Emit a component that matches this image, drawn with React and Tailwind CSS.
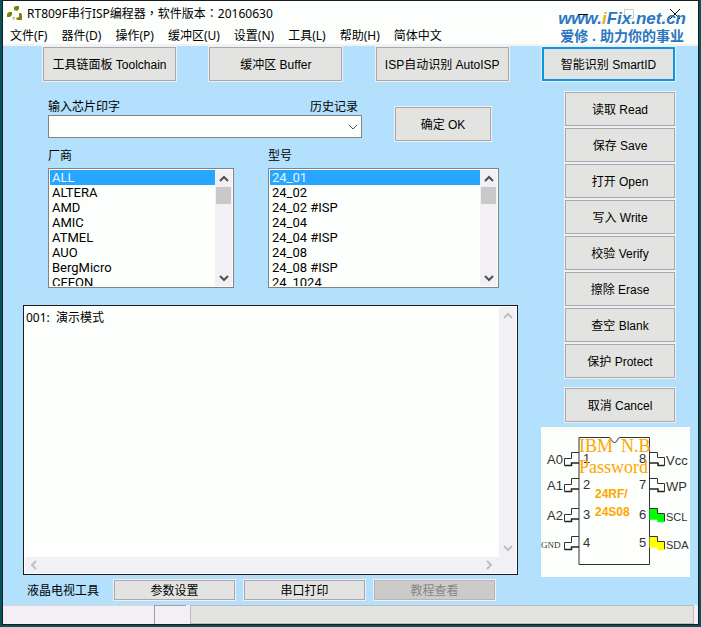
import React, { useState } from 'react';

const menus = ['文件(F)', '器件(D)', '操作(P)', '缓冲区(U)', '设置(N)', '工具(L)', '帮助(H)', '简体中文'];
const tools = ['工具链面板 Toolchain', '缓冲区 Buffer', 'ISP自动识别 AutoISP', '智能识别 SmartID'];
const actions = ['读取 Read', '保存 Save', '打开 Open', '写入 Write', '校验 Verify', '擦除 Erase', '查空 Blank', '保护 Protect'];
const vendors = ['ALL', 'ALTERA', 'AMD', 'AMIC', 'ATMEL', 'AUO', 'BergMicro', 'CFEON'];
const models = ['24_01', '24_02', '24_02 #ISP', '24_04', '24_04 #ISP', '24_08', '24_08 #ISP', '24_1024'];

const Chevron = ({ dir = 'down', color = '#505050' }) => {
    const d = {
        down: 'M1 3 L5 7 L9 3',
        up: 'M1 7 L5 3 L9 7',
        left: 'M7 1 L3 5 L7 9',
        right: 'M3 1 L7 5 L3 9',
    }[dir];
    return (
        <svg width="10" height="10" viewBox="0 0 10 10" fill="none" stroke={color} strokeWidth="2">
            <path d={d} />
        </svg>
    );
};

const Button = ({ children, className = '', active = false, disabled = false }) => {
    let look = 'border border-[#a9a8ae] bg-[#e3e4e2] text-black outline outline-[#f0eff4]';
    if (active) look = 'border-2 border-[#0d96dd] bg-[#e3e4e2] text-black outline outline-[#e4f1fa]';
    if (disabled) look = 'border border-[#b4b5b4] bg-[#cbccca] text-[#858585] outline outline-[#f0eff4]';
    return (
        <button disabled={disabled} className={`whitespace-nowrap pt-0.5 text-center ${look} ${className}`}>
            {children}
        </button>
    );
};

const ListBox = ({ label, items, className = '' }) => {
    const [selected, setSelected] = useState(items[0]);
    return (
        <div className={className}>
            <div className="h-5 leading-4">{label}</div>
            <div className="flex h-[120px] border border-[#838383] bg-[#fcfffc] p-px">
                <ul role="listbox" aria-label={label} className="flex-1 overflow-hidden font-[Roboto,'Liberation_Sans',sans-serif] text-[13px] leading-[15px]">
                    {items.map((item) => (
                        <li
                            key={item}
                            role="option"
                            aria-selected={item === selected}
                            onClick={() => setSelected(item)}
                            className={`h-[15px] px-0.5 ${item === selected ? 'bg-[#26a6ff] text-[#e8f4ff]' : 'text-black'}`}
                        >
                            {item}
                        </li>
                    ))}
                </ul>
                <div className="flex w-[17px] flex-col items-center bg-[#f3f0f5]">
                    <div className="flex h-[17px] items-center"><Chevron dir="up" /></div>
                    <div className="h-[17px] w-[15px] bg-[#c8c9c8]" />
                    <div className="mt-auto flex h-[17px] items-center"><Chevron /></div>
                </div>
            </div>
        </div>
    );
};

// DIP-8 outline, pins 1-4 on the left and 8-5 on the right
const pins = [
    { y: 25, left: 'A0', right: 'Vcc', fill: 'none' },
    { y: 51, left: 'A1', right: 'WP', fill: 'none' },
    { y: 81, left: 'A2', right: 'SCL', fill: '#00ff00' },
    { y: 109, left: 'GND', right: 'SDA', fill: '#ffff00' },
];

const ChipDiagram = () => (
    <svg viewBox="0 0 149 150" className="w-full bg-[#fcfffc] font-['Liberation_Sans',Arial,sans-serif]" role="img" aria-label="24RF/24S08">
        <path d="M38 10.5 H68 C71 10.5 70 15.5 73.5 15.5 C77 15.5 76 10.5 79 10.5 H108.5 V137.5 H38 Z" fill="none" stroke="#333" />
        {pins.map(({ y, left, right, fill }, i) => (
            <g key={left} transform={`translate(0 ${y})`} fill="#333">
                <path d="M38 .5 H30.5 V6.5 H23.5 V13.5" fill="none" stroke="#333" />
                <path d="M23.5 13.5 H30.5 V11 H38" fill="none" stroke="#222" strokeWidth="1.5" />
                <path d="M108.5 .5 H116.5 V5.5 H123.5 V13.5 H117 V11 H108.5 Z" fill={fill} />
                <path d="M108.5 .5 H116.5 V5.5 H123.5 V13.5" fill="none" stroke="#333" />
                <path d="M123.5 13.5 H117 V11 H108.5" fill="none" stroke={fill === 'none' ? '#222' : fill} strokeWidth="1.5" />
                {left === 'GND' ? (
                    <text x="0" y="12" fontSize="9" className="font-['Liberation_Serif',serif]">{left}</text>
                ) : (
                    <text x="6" y="12" fontSize="13">{left}</text>
                )}
                <text x="42" y="11" fontSize="13">{i + 1}</text>
                <text x="98" y="11" fontSize="13">{8 - i}</text>
                <text x="125" y="13" fontSize={i > 1 ? 11 : 13}>{right}</text>
            </g>
        ))}
        <g fill="#ffa500">
            <g fontSize="18" className="font-['Liberation_Serif',serif]">
                <text x="38" y="25">IBM</text>
                <text x="80" y="25">N.B</text>
                <text x="38" y="46">Password</text>
            </g>
            <g fontSize="12" fontWeight="bold">
                <text x="54" y="71">24RF/</text>
                <text x="54" y="89">24S08</text>
            </g>
        </g>
    </svg>
);

const App = () => {
    const [query, setQuery] = useState('');

    return (
        <div className="min-h-screen bg-[#04555a] px-0.5 pb-0.5 font-['Liberation_Sans','Noto_Sans_CJK_SC',sans-serif] text-xs text-black">
            <div className="relative border border-[#1c1a22] bg-[#b3e0fd]">
                {/* Title bar */}
                <header className="flex h-[25px] items-center bg-[#fcfffc] pl-1 font-['Noto_Sans','Noto_Sans_CJK_TC',sans-serif]">
                    <svg width="16" height="16" viewBox="0 0 16 16" className="mr-1">
                        <g fill="#7f7f10">
                            <path d="M7 1 L9 0 H12 V3 L10 5 L7 4 Z" />
                            <path d="M0 8 L2 6 H5 V9 L3 11 H0 Z" />
                            <path d="M12 7 H14 L15 9 V14 H10 L9 12 L12 11 Z" />
                            <path d="M5 11 H8 V13 L6 14 Z" fill="#c4c4a0" />
                        </g>
                    </svg>
                    <h1>RT809F串行ISP编程器，软件版本：20160630</h1>
                    <div className="ml-auto flex pr-[18px]">
                        <button aria-label="最小化" className="w-[46px]">
                            <svg width="10" height="10" viewBox="0 0 10 10" className="mx-auto"><path d="M0 5.5 H10" stroke="#111" /></svg>
                        </button>
                        <button aria-label="最大化" className="w-[46px]">
                            <svg width="10" height="10" viewBox="0 0 10 10" className="mx-auto"><path d="M.5 .5 H9.5 V9.5 H.5 Z" fill="none" stroke="#ccc" /></svg>
                        </button>
                        <button aria-label="关闭" className="w-7">
                            <svg width="10" height="10" viewBox="0 0 10 10" className="ml-auto"><path d="M0 0 L10 10 M10 0 L0 10" stroke="#111" /></svg>
                        </button>
                    </div>
                </header>

                {/* Menu */}
                <nav className="flex h-5 items-center gap-[14px] border-b-2 border-[#f0f2f4] bg-[#fcfffc] pt-0.5 pl-[7px] font-['Noto_Sans','Noto_Sans_CJK_SC',sans-serif]">
                    {menus.map((menu) => (
                        <button key={menu} className="whitespace-nowrap">{menu}</button>
                    ))}
                </nav>

                {/* Site mark, lies over the window buttons */}
                <a href="#ifix" className="absolute top-2 right-3 text-center font-bold text-[#2c75c0]">
                    <span className="block text-[17px] leading-[19px] italic">
                        www.<span className="text-[#f5a623]">i</span>Fix.net.cn
                    </span>
                    <span className="block text-sm leading-4">爱修 . 助力你的事业</span>
                </a>

                {/* Toolbar */}
                <div className="flex justify-between pt-px pr-[23px] pl-10">
                    {tools.map((tool, i) => (
                        <Button key={tool} active={i === 3} className="h-[34px] w-[133px]">{tool}</Button>
                    ))}
                </div>

                <main className="flex gap-[23px] pt-1.5 pr-2 pb-[3px] pl-5">
                    <div className="flex flex-1 flex-col">
                        <section className="h-[210px] border-y border-dotted border-[#ccd6d6] pr-[19px] pl-[25px]">
                            <div className="flex items-start gap-[33px] pt-[11px]">
                                <div className="flex-1">
                                    <div className="flex h-4 justify-between pr-1 leading-4">
                                        <label htmlFor="marking">输入芯片印字</label>
                                        <label htmlFor="history">历史记录</label>
                                    </div>
                                    <div className="flex h-[23px] border border-[#838383] bg-[#fcfffc]">
                                        <input
                                            id="marking"
                                            value={query}
                                            onChange={(e) => setQuery(e.target.value)}
                                            className="min-w-0 flex-1 px-1 outline-none"
                                        />
                                        <button id="history" className="flex w-4 items-center justify-center">
                                            <svg width="10" height="10" viewBox="0 0 10 10" fill="none" stroke="#555"><path d="M1 3 L5 7 L9 3" /></svg>
                                        </button>
                                    </div>
                                </div>
                                <Button className="mt-2 mr-2 h-[34px] w-24">确定 OK</Button>
                            </div>
                            <div className="flex gap-[34px] pt-[7px]">
                                <ListBox label="厂商" items={vendors} className="w-[186px]" />
                                <ListBox label="型号" items={models} className="flex-1" />
                            </div>
                        </section>

                        {/* Log */}
                        <section className="mt-2 h-[270px] border border-[#1c1c24] bg-[#fcfffc] p-px">
                            <div className="flex h-[250px]">
                                <textarea
                                    readOnly
                                    aria-label="日志"
                                    value="001:  演示模式"
                                    className="flex-1 resize-none overflow-hidden px-px pt-[3px] font-['Noto_Sans','Noto_Sans_CJK_SC',sans-serif] leading-4 outline-none"
                                />
                                <div className="flex w-[17px] flex-col items-center justify-between bg-[#f3f0f5] py-1">
                                    <Chevron dir="up" color="#bfbfbf" />
                                    <Chevron color="#bfbfbf" />
                                </div>
                            </div>
                            <div className="flex h-4 items-center justify-between bg-[#f3f0f5] pr-[22px] pl-1">
                                <Chevron dir="left" color="#bfbfbf" />
                                <Chevron dir="right" color="#bfbfbf" />
                            </div>
                        </section>

                        <section className="mt-px flex h-[26px] items-center border border-dotted border-[#ccd6d6]">
                            <h2 className="w-[90px] pt-1 pl-[3px]">液晶电视工具</h2>
                            <div className="flex flex-1 gap-[9px] pt-0.5 pr-[22px]">
                                <Button className="h-5 flex-1">参数设置</Button>
                                <Button className="h-5 flex-1">串口打印</Button>
                                <Button className="h-5 flex-1" disabled>教程查看</Button>
                            </div>
                        </section>
                    </div>

                    <aside className="w-[149px]">
                        <div className="flex flex-col gap-0.5 border-t border-dotted border-[#ccd6d6] pt-1 pr-[15px] pb-[3px] pl-6">
                            {actions.map((action) => (
                                <Button key={action} className="h-[34px]">{action}</Button>
                            ))}
                        </div>
                        <div className="flex border-t border-dotted border-[#ccd6d6] pt-1.5 pr-[15px] pb-[5px] pl-6">
                            <Button className="h-[34px] flex-1">取消 Cancel</Button>
                        </div>
                        <ChipDiagram />
                    </aside>
                </main>

                {/* Status bar */}
                <footer className="flex h-[19px] bg-[#f3f0f5] pr-1">
                    <div className="w-[151px] border-t border-[#d8d8d4]" />
                    <div className="mr-1 w-8 border-t border-l border-[#a0a0a0]" />
                    <div className="flex-1 border border-[#bcbcba] bg-[#e3e4e2]" />
                </footer>
            </div>
        </div>
    );
};

export default App;
